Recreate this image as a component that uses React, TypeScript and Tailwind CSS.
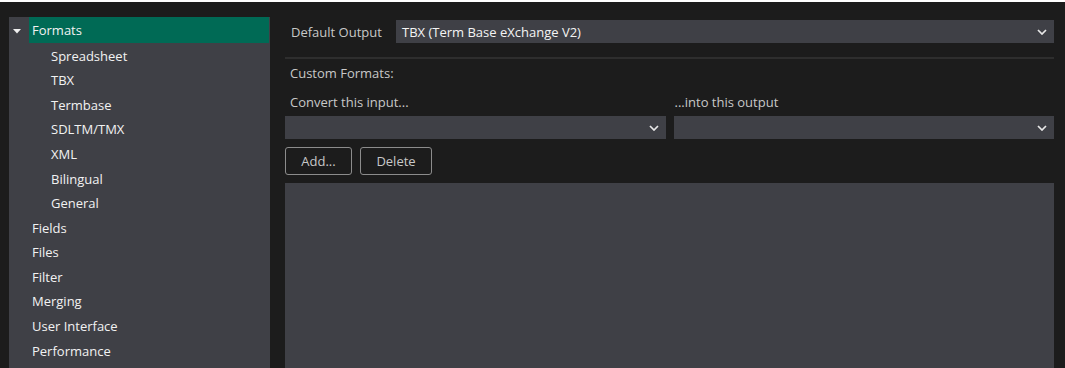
import React from "react";

const Chevron = () => (
  <svg width="10" height="6" viewBox="0 0 10 6" className="shrink-0">
    <path d="M1 1 L5 5 L9 1" fill="none" stroke="#e8e8e8" strokeWidth="1.7" />
  </svg>
);

const Select = ({ text, className }: { text?: string; className?: string }) => (
  <div className={`h-[23px] bg-[#3f4046] flex items-center justify-between pl-[6px] pr-[7px] ${className ?? ""}`}>
    <span className="text-[#f4f4f4] text-[13px] pt-[2px]">{text ?? ""}</span>
    <Chevron />
  </div>
);

const sub = ["Spreadsheet", "TBX", "Termbase", "SDLTM/TMX", "XML", "Bilingual", "General"];
const top = ["Fields", "Files", "Filter", "Merging", "User Interface", "Performance"];

export default function App() {
  return (
    <div
      className="w-[1065px] h-[368px] bg-[#1c1c1c] overflow-hidden flex flex-col"
      style={{ fontFamily: '"Open Sans", "Noto Sans", sans-serif' }}
    >
      <div className="h-[2px] bg-white shrink-0" />
      <div className="flex flex-1 pt-[15px] min-h-0">
        <div className="ml-[9px] w-[261px] bg-[#3f4046] flex flex-col text-[13px] text-[#f2f2f2]">
          <div className="h-[26px] flex items-center">
            <div className="w-[20px] flex justify-start pl-[4px] pt-[2px]">
              <svg width="8" height="5" viewBox="0 0 8 5">
                <path d="M0 0 L8 0 L4 4.5 Z" fill="#f0f0f0" />
              </svg>
            </div>
            <div className="flex-1 h-full bg-[#006a55] flex items-center pl-[3px] pt-[2px] mr-[1px]">Formats</div>
          </div>
          {sub.map((s) => (
            <div key={s} className="h-[24.6px] flex items-center pt-[2px] pl-[42px]">{s}</div>
          ))}
          {top.map((s) => (
            <div key={s} className="h-[24.6px] flex items-center pt-[2px] pl-[23px]">{s}</div>
          ))}
        </div>
        <div className="flex-1 flex flex-col pl-[15px] pr-[11px] min-w-0">
          <div className="flex items-center h-[23px] mt-[3px]">
            <span className="text-[#c8c8c8] text-[13px] pl-[6px] pt-[2px] w-[111px]">Default Output</span>
            <Select text="TBX (Term Base eXchange V2)" className="flex-1" />
          </div>
          <div className="h-[2px] bg-[#2e2e2e] mt-[14px]" />
          <div className="text-[#c8c8c8] text-[13px] pl-[5px] pt-[2px] h-[20px] flex items-center mt-[4px]">Custom Formats:</div>
          <div className="flex gap-[8px] mt-[9px]">
            <div className="flex-1 flex flex-col">
              <div className="text-[#c8c8c8] text-[13px] pl-[5px] pt-[2px] h-[20px] flex items-center">Convert this input...</div>
              <Select className="mt-[4px]" />
            </div>
            <div className="flex-1 flex flex-col">
              <div className="text-[#c8c8c8] text-[13px] pl-[1px] pt-[2px] h-[20px] flex items-center">...into this output</div>
              <Select className="mt-[4px]" />
            </div>
          </div>
          <div className="flex gap-[8px] mt-[8px]">
            <div className="w-[67px] h-[28px] border border-[#8c8c8c] rounded-[3px] flex items-center justify-center pt-[2px] text-[#c8c8c8] text-[13px]">Add...</div>
            <div className="w-[72px] h-[28px] border border-[#8c8c8c] rounded-[3px] flex items-center justify-center pt-[2px] text-[#c8c8c8] text-[13px]">Delete</div>
          </div>
          <div className="flex-1 bg-[#3f4046] mt-[8px]" />
        </div>
      </div>
    </div>
  );
}
